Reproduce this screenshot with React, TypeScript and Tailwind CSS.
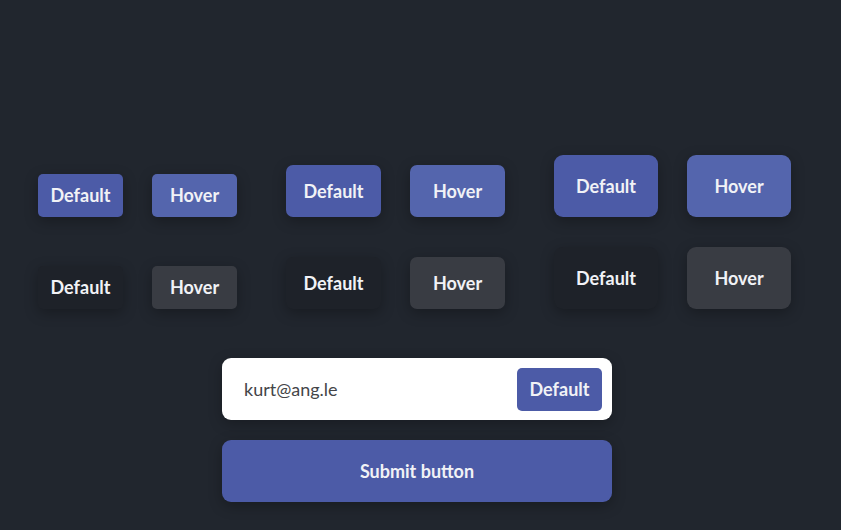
import React from 'react';

type Size = 'sm' | 'md' | 'lg';

const sizeClass: Record<Size, string> = {
  sm: 'w-[85px] h-[43px] rounded-[5px]',
  md: 'w-[95px] h-[52px] rounded-[7px]',
  lg: 'w-[104px] h-[62px] rounded-[9px]',
};

const Btn: React.FC<{ size: Size; variant: 'primary' | 'ghost'; label: string; hover?: boolean }> = ({
  size, variant, label, hover,
}) => {
  const color =
    variant === 'primary'
      ? hover
        ? 'bg-[#5465ad]'
        : 'bg-[#4c5ba7]'
      : hover
        ? 'bg-[#393c43]'
        : 'bg-[#1e2229]';
  return (
    <button
      className={`${sizeClass[size]} ${color} flex items-center justify-center text-[18px] font-bold text-[#f1f2f6] shadow-[0_4px_14px_rgba(0,0,0,0.28)]`}
    >
      {label}
    </button>
  );
};

const Group: React.FC<{ size: Size }> = ({ size }) => (
  <div className="grid grid-cols-2 grid-rows-[62px_62px] gap-x-[29px] gap-y-[30px] items-end">
    <Btn size={size} variant="primary" label="Default" />
    <Btn size={size} variant="primary" label="Hover" hover />
    <Btn size={size} variant="ghost" label="Default" />
    <Btn size={size} variant="ghost" label="Hover" hover />
  </div>
);

export default function App() {
  return (
    <div
      className="w-[841px] h-[530px] bg-[#21262e] pt-[155px] pl-[38px] overflow-hidden"
      style={{ fontFamily: 'Lato, "Noto Sans", sans-serif' }}
    >
      <div className="flex gap-[49px]">
        <Group size="sm" />
        <Group size="md" />
        <Group size="lg" />
      </div>

      <div className="ml-[184px] mt-[49px] w-[390px] flex flex-col gap-[20px]">
        <div className="h-[62px] bg-white rounded-[9px] flex items-center justify-between pl-[22px] pr-[10px] shadow-[0_4px_14px_rgba(0,0,0,0.25)]">
          <span className="text-[18px] text-[#444548]">kurt@ang.le</span>
          <button className="w-[85px] h-[43px] rounded-[5px] bg-[#4c5ba7] text-[18px] font-bold text-[#f1f2f6] flex items-center justify-center">
            Default
          </button>
        </div>
        <button className="h-[62px] rounded-[9px] bg-[#4c5ba7] text-[18px] font-bold text-[#f1f2f6] flex items-center justify-center shadow-[0_4px_14px_rgba(0,0,0,0.28)]">
          Submit button
        </button>
      </div>
    </div>
  );
}
